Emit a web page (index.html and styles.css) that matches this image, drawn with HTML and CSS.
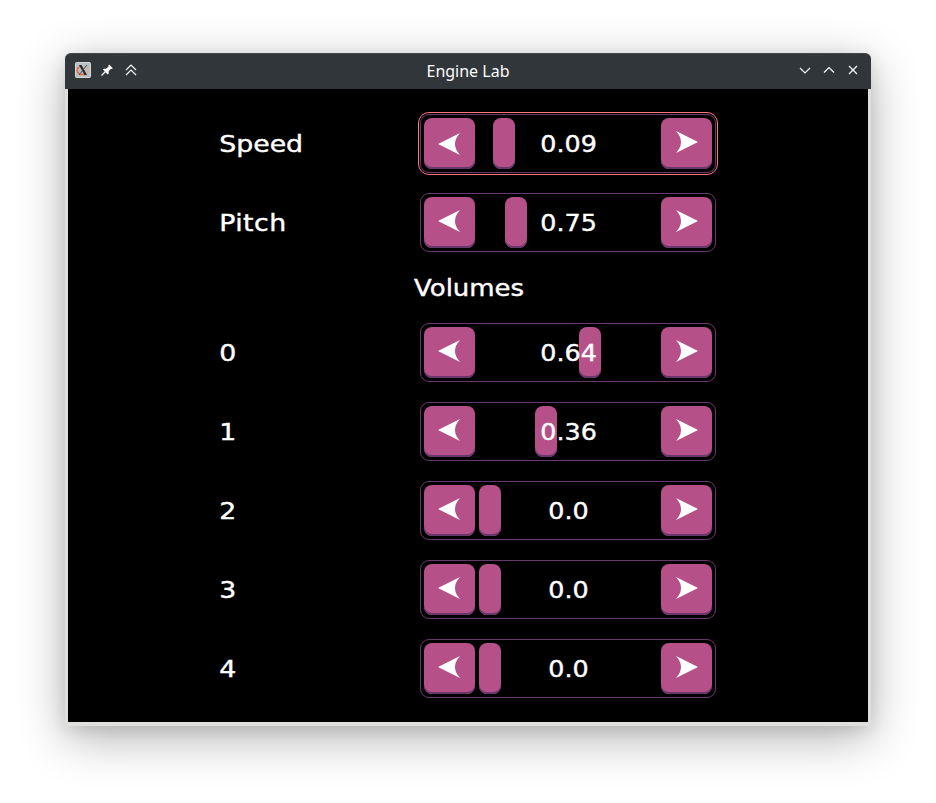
FILE: index.html
```
<!DOCTYPE html>
<html lang="en">
<head>
<meta charset="utf-8">
<title>Engine Lab</title>
<link rel="stylesheet" href="styles.css">
</head>
<body>
<main class="window">
  <header class="titlebar">
    <div class="tools">
      <svg width="16" height="16" viewBox="0 0 16 16"><rect x=".5" y=".5" width="15" height="15" rx="1" fill="#b9c0c5" stroke="#d3d7d9"/><path d="M6 4.500C1 5 1 11.500 6 12.500h5" fill="none" stroke="#e5703c" stroke-width="1.600"/><path d="M11.500 4.500q3.500 3 0 7.500" fill="none" stroke="#dfb37c" stroke-width="1.300"/><path d="M4 3h2.500l5.500 10H9.500z" fill="#262a2d"/><path d="M12 3 4 13" stroke="#42474a" stroke-width="1"/></svg>
      <svg width="16" height="16" viewBox="0 0 16 16"><path d="m10 2.500 3.900 3.800-1.200.7-.8-.2-2.200 2.500v2.200l-1 .9-4.800-4.800.9-.9h2.200l2.600-2.300-.2-.9z" fill="#fcfcfc"/><path d="m6.500 9.500-4 4" stroke="#fcfcfc" stroke-width="1.200"/></svg>
      <svg width="16" height="16" viewBox="0 0 16 16"><path d="m3 8 5-5 5 5M3 13l5-5 5 5" class="line"/></svg>
    </div>
    <h1>Engine Lab</h1>
    <div class="tools">
      <svg width="16" height="16" viewBox="0 0 16 16"><path d="m3 6 5 5 5-5" class="line"/></svg>
      <svg width="16" height="16" viewBox="0 0 16 16"><path d="m3 10.500 5-5 5 5" class="line"/></svg>
      <svg width="16" height="16" viewBox="0 0 16 16"><path d="m4 4 8 8m0-8-8 8" class="line"/></svg>
    </div>
  </header>
  <section class="panel">
    <div class="row"><span class="name">Speed</span><div class="slider focused"><button class="key prev"></button><div class="track"><i class="thumb" style="margin-left:14px"></i><output>0.09</output></div><button class="key next"></button></div></div>
    <div class="row"><span class="name pitch">Pitch</span><div class="slider"><button class="key prev"></button><div class="track"><i class="thumb" style="margin-left:26px"></i><output>0.75</output></div><button class="key next"></button></div></div>
    <h2>Volumes</h2>
    <div class="row"><span class="name">0</span><div class="slider"><button class="key prev"></button><div class="track"><i class="thumb" style="margin-left:100px"></i><output>0.64</output></div><button class="key next"></button></div></div>
    <div class="row"><span class="name">1</span><div class="slider"><button class="key prev"></button><div class="track"><i class="thumb" style="margin-left:56px"></i><output>0.36</output></div><button class="key next"></button></div></div>
    <div class="row"><span class="name">2</span><div class="slider"><button class="key prev"></button><div class="track"><i class="thumb" style="margin-left:0px"></i><output>0.0</output></div><button class="key next"></button></div></div>
    <div class="row"><span class="name">3</span><div class="slider"><button class="key prev"></button><div class="track"><i class="thumb" style="margin-left:0px"></i><output>0.0</output></div><button class="key next"></button></div></div>
    <div class="row"><span class="name">4</span><div class="slider"><button class="key prev"></button><div class="track"><i class="thumb" style="margin-left:0px"></i><output>0.0</output></div><button class="key next"></button></div></div>
  </section>
</main>
<script src="script.js"></script>
</body>
</html>
```
FILE: script.js
```
// Every arrow key shares one glyph; the next key mirrors it.
document.querySelectorAll(".key").forEach(function (key) {
  key.setAttribute("aria-label", key.classList.contains("prev") ? "Decrease" : "Increase");
  key.innerHTML = '<svg width="22" height="22" viewBox="0 0 22 22"><path d="M0 11 22 0Q12 11 22 22Z" fill="#fff"/></svg>';
});
```
FILE: styles.css
```
* { box-sizing: border-box; }
body {
  margin: 0;
  padding: 53px 65px 0;
  height: 803px;
  overflow: hidden;
  background: #fff;
}
.window {
  width: 806px;
  height: 673px;
  border-radius: 6px 6px 4px 4px;
  background: #dfdfde;
  box-shadow: 0 12px 48px rgba(0, 0, 0, .3), 0 4px 16px rgba(0, 0, 0, .1);
}
.titlebar {
  height: 36px;
  padding: 0 10px 2px;
  display: flex;
  align-items: center;
  justify-content: space-between;
  background: #31363b;
  border-top: 1px solid #43484c;
  border-radius: 6px 6px 0 0;
  color: #fcfcfc;
}
.tools { display: flex; gap: 8px; padding-bottom: 2px; }
.tools svg { display: block; }
.line { fill: none; stroke: #fcfcfc; stroke-width: 1.2; }
h1 {
  margin: 0;
  font: 400 16px/22px "Noto Sans", sans-serif;
}
.panel {
  height: 633px;
  margin: 0 3px;
  padding: 25px 152px 0 150px;
  display: flex;
  flex-direction: column;
  gap: 20px;
  background: #000;
  color: #fff;
  font: 400 23.5px/31px "DejaVu Sans", sans-serif;
  -webkit-text-stroke: .4px #fff;
}
.row {
  height: 59px;
  display: flex;
  align-items: center;
  justify-content: space-between;
}
.name {
  padding: 2px 0 0 1px;
  transform: scaleX(1.14);
  transform-origin: left;
}
.pitch { letter-spacing: .4px; }
h2 {
  margin: 0 0 0 196px;
  padding-top: 1px;
  height: 31px;
  width: 120px;
  font: inherit;
  transform: scaleX(1.105);
  transform-origin: left;
}
.slider {
  width: 296px;
  height: 59px;
  padding: 3px;
  display: flex;
  gap: 4px;
  border: 1px solid #68386c;
  border-radius: 9px;
}
.focused { outline: 1px solid #ff7777; outline-offset: 1px; }
.key, .thumb {
  height: 51px;
  background: #b55088;
  border: 0;
  border-radius: 8px;
  box-shadow: inset 0 -2px #68386c;
}
.key {
  width: 51px;
  padding: 0 0 4px;
  display: flex;
  align-items: center;
  justify-content: center;
}
.prev { padding-right: 2px; }
.focused .prev { padding-bottom: 0; }
.next svg { transform: scaleX(-1); }
.track { flex: 1; display: grid; align-items: center; }
.track > * { grid-area: 1 / 1; }
.thumb { width: 22px; }
output {
  z-index: 1;
  padding: 2px 0 0 1px;
  text-align: center;
  transform: scaleX(1.08);
}
```
